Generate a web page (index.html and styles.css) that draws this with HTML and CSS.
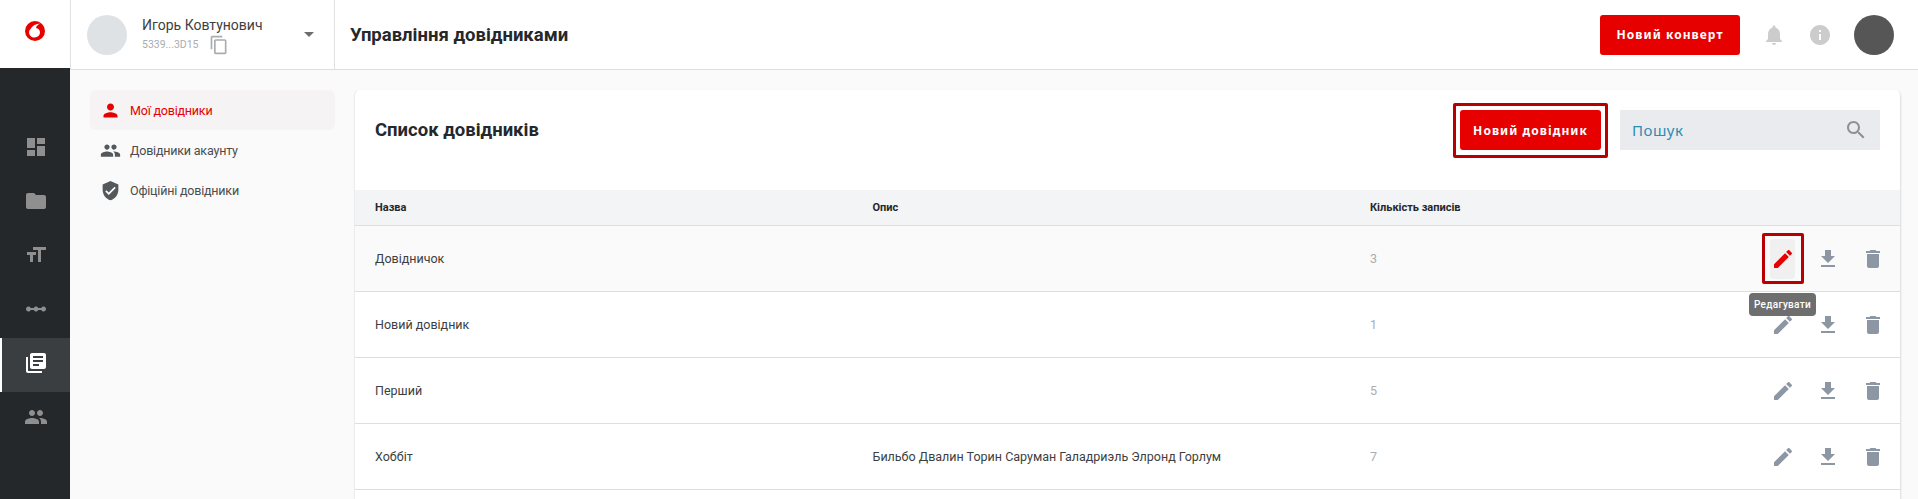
FILE: index.html
```html
<!doctype html>
<html>
<head>
<meta charset="utf-8">
<title>Управління довідниками</title>
<link rel="stylesheet" href="styles.css">
</head>

<body>
	<aside class="rail">
		<div class="rail-logo">
			<svg width="20" height="20" viewBox="0 0 20 20"><circle class="logo-o" cx="10" cy="10" r="10"/><path class="logo-mark" d="M15.400 2.400C11.400 2.600 6.800 4.800 6 7.600 4.800 8.400 4.100 10 4.100 11.400 4.100 14.300 6.400 16.400 9.500 16.400 12.700 16.400 15 14.200 15 11.300 15 8.800 13 7.400 11 7 11 5 13 3.400 15.400 2.400Z"/></svg>
		</div>
		<nav class="rail-nav">
			<a class="rail-item"><svg width="24" height="24" viewBox="0 0 24 24"><path d="M3 13h8V3H3v10zm0 8h8v-6H3v6zm10 0h8V11h-8v10zm0-18v6h8V3h-8z"/></svg></a>
			<a class="rail-item"><svg width="24" height="24" viewBox="0 0 24 24"><path d="M10 4H4c-1.100 0-1.990.9-1.990 2L2 18c0 1.100.9 2 2 2h16c1.100 0 2-.9 2-2V8c0-1.100-.9-2-2-2h-8l-2-2z"/></svg></a>
			<a class="rail-item"><svg width="24" height="24" viewBox="0 0 24 24"><path d="M9 4v3h5v12h3V7h5V4H9zm-6 8h3v7h3v-7h3V9H3v3z"/></svg></a>
			<a class="rail-item"><svg width="24" height="24" viewBox="0 0 24 24"><path d="M19.500 9.500c-1.030 0-1.900.62-2.290 1.500h-2.920c-.39-.88-1.260-1.500-2.290-1.500s-1.900.62-2.290 1.500H6.790c-.39-.88-1.260-1.500-2.290-1.500C3.120 9.500 2 10.620 2 12s1.120 2.500 2.500 2.500c1.030 0 1.900-.62 2.290-1.500h2.920c.39.88 1.260 1.500 2.290 1.500s1.900-.62 2.290-1.500h2.920c.39.88 1.260 1.500 2.290 1.500 1.380 0 2.500-1.120 2.500-2.500s-1.120-2.500-2.500-2.500z"/></svg></a>
			<a class="rail-item on"><svg width="24" height="24" viewBox="0 0 24 24"><path d="M4 6H2v14c0 1.100.9 2 2 2h14v-2H4V6zm16-4H8c-1.100 0-2 .9-2 2v12c0 1.100.9 2 2 2h12c1.100 0 2-.9 2-2V4c0-1.100-.9-2-2-2zm-1 9H9V9h10v2zm-4 4H9v-2h6v2zm4-8H9V5h10v2z"/></svg></a>
			<a class="rail-item"><svg width="24" height="24" viewBox="0 0 24 24"><path d="M16 11c1.660 0 2.990-1.340 2.990-3S17.660 5 16 5c-1.660 0-3 1.340-3 3s1.340 3 3 3zm-8 0c1.660 0 2.990-1.340 2.990-3S9.660 5 8 5C6.340 5 5 6.340 5 8s1.340 3 3 3zm0 2c-2.330 0-7 1.170-7 3.500V19h14v-2.500c0-2.330-4.670-3.500-7-3.500zm8 0c-.29 0-.62.02-.97.05 1.160.84 1.970 1.970 1.970 3.450V19h6v-2.500c0-2.330-4.670-3.500-7-3.500z"/></svg></a>
		</nav>
	</aside>

	<div class="page">
		<header class="topbar">
			<div class="account">
				<div class="account-pic"></div>
				<div class="account-info">
					<div class="account-name">Игорь Ковтунович</div>
					<div class="account-id">
						<span>5339...3D15</span>
						<svg width="20" height="20" viewBox="0 0 24 24"><path d="M16 1H4c-1.100 0-2 .9-2 2v14h2V3h12V1zm3 4H8c-1.100 0-2 .9-2 2v14c0 1.100.9 2 2 2h11c1.100 0 2-.9 2-2V7c0-1.100-.9-2-2-2zm0 16H8V7h11v14z"/></svg>
					</div>
				</div>
				<div class="account-arrow"></div>
			</div>
			<h1 class="page-title">Управління довідниками</h1>
			<div class="topbar-right">
				<button class="btn">Новий конверт</button>
				<svg class="top-icon bell" width="24" height="24" viewBox="0 0 24 24"><path d="M12 22c1.100 0 2-.9 2-2h-4c0 1.100.89 2 2 2zm6-6v-5c0-3.070-1.640-5.640-4.500-6.320V4c0-.83-.67-1.500-1.500-1.500s-1.500.67-1.500 1.500v.68C7.630 5.360 6 7.920 6 11v5l-2 2v1h16v-1l-2-2z"/></svg>
				<svg class="top-icon info" width="24" height="24" viewBox="0 0 24 24"><path d="M12 2C6.480 2 2 6.480 2 12s4.480 10 10 10 10-4.480 10-10S17.520 2 12 2zm1 15h-2v-6h2v6zm0-8h-2V7h2v2z"/></svg>
				<div class="top-avatar"></div>
			</div>
		</header>

		<div class="content">
			<ul class="side-menu">
				<li class="side-item on"><svg width="21" height="21" viewBox="0 0 24 24"><path d="M12 12c2.210 0 4-1.790 4-4s-1.790-4-4-4-4 1.790-4 4 1.790 4 4 4zm0 2c-2.670 0-8 1.340-8 4v2h16v-2c0-2.660-5.330-4-8-4z"/></svg>Мої довідники</li>
				<li class="side-item"><svg width="21" height="21" viewBox="0 0 24 24"><path d="M16 11c1.660 0 2.990-1.340 2.990-3S17.660 5 16 5c-1.660 0-3 1.340-3 3s1.340 3 3 3zm-8 0c1.660 0 2.990-1.340 2.990-3S9.660 5 8 5C6.340 5 5 6.340 5 8s1.340 3 3 3zm0 2c-2.330 0-7 1.170-7 3.500V19h14v-2.500c0-2.330-4.670-3.500-7-3.500zm8 0c-.29 0-.62.02-.97.05 1.160.84 1.970 1.970 1.970 3.450V19h6v-2.500c0-2.330-4.670-3.500-7-3.500z"/></svg>Довідники акаунту</li>
				<li class="side-item"><svg width="21" height="21" viewBox="0 0 24 24"><path d="M12 1L3 5v6c0 5.550 3.840 10.740 9 12 5.160-1.260 9-6.450 9-12V5l-9-4zm-2 16l-4-4 1.410-1.410L10 14.170l6.590-6.590L18 9l-8 8z"/></svg>Офіційні довідники</li>
			</ul>

			<section class="card">
				<div class="card-head">
					<h2 class="card-title">Список довідників</h2>
					<div class="btn-focus"><button class="btn">Новий довідник</button></div>
					<div class="search">
						<span>Пошук</span>
						<svg width="24" height="24" viewBox="0 0 24 24"><path d="M15.500 14h-.79l-.28-.27C15.410 12.590 16 11.110 16 9.500 16 5.910 13.090 3 9.500 3S3 5.910 3 9.500 5.910 16 9.500 16c1.610 0 3.090-.59 4.230-1.570l.27.28v.79l5 4.990L20.490 19l-4.990-5zm-6 0C7.010 14 5 11.990 5 9.500S7.010 5 9.500 5 14 7.010 14 9.500 11.990 14 9.500 14z"/></svg>
					</div>
				</div>

				<div class="t-row t-head">
					<div>Назва</div>
					<div>Опис</div>
					<div>Кількість записів</div>
					<div></div>
				</div>

				<div class="t-row hover">
					<div>Довідничок</div>
					<div></div>
					<div class="count">3</div>
					<div class="actions">
						<span class="act focus">
							<svg width="24" height="24" viewBox="0 0 24 24"><path d="M3 17.250V21h3.750L17.810 9.940l-3.750-3.750L3 17.250zM20.710 7.040c.39-.39.39-1.020 0-1.410l-2.340-2.340c-.39-.39-1.020-.39-1.410 0l-1.830 1.830 3.750 3.750 1.830-1.830z"/></svg>
							<span class="tip">Редагувати</span>
						</span>
						<span class="act"><svg width="24" height="24" viewBox="0 0 24 24"><path d="M19 9h-4V3H9v6H5l7 7 7-7zM5 18v2h14v-2H5z"/></svg></span>
						<span class="act"><svg width="24" height="24" viewBox="0 0 24 24"><path d="M6 19c0 1.100.9 2 2 2h8c1.100 0 2-.9 2-2V7H6v12zM19 4h-3.500l-1-1h-5l-1 1H5v2h14V4z"/></svg></span>
					</div>
				</div>

				<div class="t-row">
					<div>Новий довідник</div>
					<div></div>
					<div class="count">1</div>
					<div class="actions">
						<span class="act"><svg width="24" height="24" viewBox="0 0 24 24"><path d="M3 17.250V21h3.750L17.810 9.940l-3.750-3.750L3 17.250zM20.710 7.040c.39-.39.39-1.020 0-1.410l-2.340-2.340c-.39-.39-1.020-.39-1.410 0l-1.830 1.830 3.750 3.750 1.830-1.830z"/></svg></span>
						<span class="act"><svg width="24" height="24" viewBox="0 0 24 24"><path d="M19 9h-4V3H9v6H5l7 7 7-7zM5 18v2h14v-2H5z"/></svg></span>
						<span class="act"><svg width="24" height="24" viewBox="0 0 24 24"><path d="M6 19c0 1.100.9 2 2 2h8c1.100 0 2-.9 2-2V7H6v12zM19 4h-3.500l-1-1h-5l-1 1H5v2h14V4z"/></svg></span>
					</div>
				</div>

				<div class="t-row">
					<div>Перший</div>
					<div></div>
					<div class="count">5</div>
					<div class="actions">
						<span class="act"><svg width="24" height="24" viewBox="0 0 24 24"><path d="M3 17.250V21h3.750L17.810 9.940l-3.750-3.750L3 17.250zM20.710 7.040c.39-.39.39-1.020 0-1.410l-2.340-2.340c-.39-.39-1.020-.39-1.410 0l-1.830 1.830 3.750 3.750 1.830-1.830z"/></svg></span>
						<span class="act"><svg width="24" height="24" viewBox="0 0 24 24"><path d="M19 9h-4V3H9v6H5l7 7 7-7zM5 18v2h14v-2H5z"/></svg></span>
						<span class="act"><svg width="24" height="24" viewBox="0 0 24 24"><path d="M6 19c0 1.100.9 2 2 2h8c1.100 0 2-.9 2-2V7H6v12zM19 4h-3.500l-1-1h-5l-1 1H5v2h14V4z"/></svg></span>
					</div>
				</div>

				<div class="t-row">
					<div>Хоббіт</div>
					<div>Бильбо Двалин Торин Саруман Галадриэль Элронд Горлум</div>
					<div class="count">7</div>
					<div class="actions">
						<span class="act"><svg width="24" height="24" viewBox="0 0 24 24"><path d="M3 17.250V21h3.750L17.810 9.940l-3.750-3.750L3 17.250zM20.710 7.040c.39-.39.39-1.020 0-1.410l-2.340-2.340c-.39-.39-1.020-.39-1.410 0l-1.830 1.830 3.750 3.750 1.830-1.830z"/></svg></span>
						<span class="act"><svg width="24" height="24" viewBox="0 0 24 24"><path d="M19 9h-4V3H9v6H5l7 7 7-7zM5 18v2h14v-2H5z"/></svg></span>
						<span class="act"><svg width="24" height="24" viewBox="0 0 24 24"><path d="M6 19c0 1.100.9 2 2 2h8c1.100 0 2-.9 2-2V7H6v12zM19 4h-3.500l-1-1h-5l-1 1H5v2h14V4z"/></svg></span>
					</div>
				</div>
			</section>
		</div>
	</div>
</body>
</html>
```

FILE: styles.css
```css
*{
	box-sizing:border-box;
	padding:0;
	margin:0;
}

html,body{
	height:100%;
	overflow:hidden;
}

body{
	display:flex;
	background:#fafafa;
	font-family:Roboto,"Noto Sans","Liberation Sans",sans-serif;
	color:#25282b;
}

/* left rail */
.rail{
	width:70px;
	flex-shrink:0;
	background:#25282b;
}

.rail-logo{
	height:68px;
	background:#fff;
	display:flex;
	align-items:center;
	justify-content:center;
	padding-bottom:6px;
}

.logo-o{
	fill:#e60000;
}

.logo-mark{
	fill:#fff;
}

.rail-nav{
	padding-top:54px;
}

.rail-item{
	height:54px;
	display:flex;
	align-items:center;
	justify-content:center;
	padding-bottom:4px;
	border-left:2px solid transparent;
	fill:#8f8f8f;
}

.rail-item.on{
	background:#3b3e41;
	border-left-color:#fff;
	fill:#fff;
}

/* top bar */
.page{
	flex:1;
	min-width:0;
	display:flex;
	flex-direction:column;
}

.topbar{
	height:70px;
	flex-shrink:0;
	background:#fff;
	border-bottom:1px solid #dedede;
	display:flex;
	align-items:center;
}

.account{
	width:265px;
	height:100%;
	border-left:1px solid #e1e1e1;
	border-right:1px solid #e1e1e1;
	display:flex;
	align-items:center;
	padding-left:16px;
}

.account-pic{
	width:40px;
	height:40px;
	border-radius:50%;
	background:#dfe2e5;
}

.account-info{
	margin-left:15px;
	flex:1;
}

.account-name{
	font-size:14px;
	line-height:20px;
	color:#3c3f42;
}

.account-id{
	display:flex;
	align-items:center;
	gap:10px;
	font-size:10.500px;
	line-height:20px;
	color:#a9adb1;
	fill:#a9adb1;
}

.account-arrow{
	width:0;
	height:0;
	border-left:5px solid transparent;
	border-right:5px solid transparent;
	border-top:5px solid #6b6e71;
	margin-right:20px;
}

.page-title{
	font-size:18.500px;
	font-weight:700;
	margin-left:15px;
	flex:1;
}

.topbar-right{
	display:flex;
	align-items:center;
	padding-right:24px;
}

.btn{
	width:140px;
	height:40px;
	border:0;
	border-radius:3px;
	background:#e60000;
	color:#fff;
	font-family:"Noto Sans",sans-serif;
	font-size:12px;
	font-weight:700;
	letter-spacing:1.050px;
}

.top-icon{
	fill:#ccc;
}

.bell{
	margin-left:22px;
}

.info{
	margin-left:22px;
}

.top-avatar{
	width:40px;
	height:40px;
	border-radius:50%;
	background:#565656;
	margin-left:22px;
}

/* content */
.content{
	flex:1;
	display:flex;
	padding:20px 18px 0 20px;
}

.side-menu{
	width:245px;
	flex-shrink:0;
	list-style-type:none;
}

.side-item{
	height:40px;
	display:flex;
	align-items:center;
	gap:9px;
	padding-left:10px;
	font-size:12.500px;
	letter-spacing:-.2px;
	color:#4a4d50;
	fill:#55585b;
	border-radius:6px;
}

.side-item.on{
	background:#f5f3f3;
	color:#e60000;
	fill:#e60000;
}

.card{
	flex:1;
	margin-left:20px;
	background:#fff;
	border-radius:5px 5px 0 0;
	box-shadow:1px 1px 2px rgba(0,0,0,.12),-1px 0 1px rgba(0,0,0,.06);
}

.card-head{
	height:100px;
	display:flex;
	padding:20px 20px 0;
}

.card-title{
	font-size:18.500px;
	font-weight:700;
	line-height:40px;
	flex:1;
}

.btn-focus{
	border:3px solid #b80000;
	padding:4px;
	margin:-7px 12px 0 0;
	height:55px;
	border-radius:2px;
	line-height:0;
}

.btn-focus .btn{
	width:141px;
}

.search{
	width:260px;
	height:40px;
	background:#e9ebee;
	display:flex;
	align-items:center;
	justify-content:space-between;
	padding:0 12px;
	font-family:"Noto Sans",sans-serif;
	font-size:15px;
	letter-spacing:.5px;
	color:#2e8bb0;
	fill:#8d9196;
}

/* table */
.t-row{
	height:66px;
	display:grid;
	grid-template-columns:497.500px 497.500px 1fr 160px;
	align-items:center;
	padding-left:20px;
	border-bottom:1px solid #dedede;
	font-size:12.500px;
	color:#3c3f42;
}

.t-head{
	height:36px;
	background:#f3f4f6;
	font-size:11px;
	font-weight:700;
	color:#25282b;
}

.hover{
	background:#fafafa;
}

.count{
	color:#a9adb1;
}

.actions{
	display:flex;
	justify-content:flex-end;
	padding-right:15px;
	gap:20px;
}

.act{
	position:relative;
	width:25px;
	height:40px;
	display:flex;
	align-items:center;
	justify-content:center;
	fill:#8d96a3;
}

.act.focus{
	fill:#e60000;
	background:#f0f0f0;
	border-radius:4px;
}

.act.focus::before{
	content:"";
	position:absolute;
	top:-6px;
	right:-9px;
	bottom:-5px;
	left:-8px;
	border:3px solid #b80000;
	border-radius:2px;
}

.tip{
	position:absolute;
	top:54px;
	left:-21px;
	width:67px;
	height:23px;
	background:#6e6e6e;
	border-radius:4px;
	color:#fff;
	font-size:10px;
	font-weight:500;
	letter-spacing:.3px;
	line-height:23px;
	text-align:center;
	z-index:2;
}
```
